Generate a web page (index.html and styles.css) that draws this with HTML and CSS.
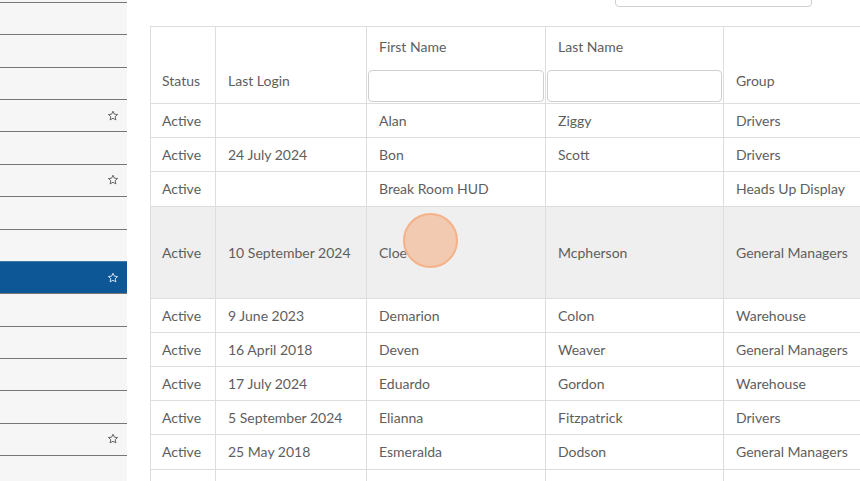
FILE: index.html
```html
<!DOCTYPE html>
<html>
<head>
<meta charset="utf-8">
<link rel="stylesheet" href="styles.css">
</head>
<body>
<div class="app">
  <nav class="sidebar">
    <div class="item"></div>
    <div class="item"></div>
    <div class="item"></div>
    <div class="item"><svg class="star" viewBox="0 0 12 12"><path d="M6 1.2 7.4 4.2 10.6 4.5 8.2 6.7 8.9 9.9 6 8.3 3.1 9.9 3.8 6.7 1.4 4.5 4.6 4.2Z"/></svg></div>
    <div class="item"></div>
    <div class="item"><svg class="star" viewBox="0 0 12 12"><path d="M6 1.2 7.4 4.2 10.6 4.5 8.2 6.7 8.9 9.9 6 8.3 3.1 9.9 3.8 6.7 1.4 4.5 4.6 4.2Z"/></svg></div>
    <div class="item"></div>
    <div class="item"></div>
    <div class="item active"><svg class="star" viewBox="0 0 12 12"><path d="M6 1.2 7.4 4.2 10.6 4.5 8.2 6.7 8.9 9.9 6 8.3 3.1 9.9 3.8 6.7 1.4 4.5 4.6 4.2Z"/></svg></div>
    <div class="item"></div>
    <div class="item"></div>
    <div class="item"></div>
    <div class="item"></div>
    <div class="item"><svg class="star" viewBox="0 0 12 12"><path d="M6 1.2 7.4 4.2 10.6 4.5 8.2 6.7 8.9 9.9 6 8.3 3.1 9.9 3.8 6.7 1.4 4.5 4.6 4.2Z"/></svg></div>
    <div class="item"></div>
  </nav>
  <main class="main">
    <div class="toolbar"><input class="search" type="text"></div>
    <table class="grid">
      <colgroup>
        <col class="w-status"><col class="w-login"><col class="w-first"><col class="w-last"><col class="w-group">
      </colgroup>
      <thead>
        <tr>
          <th>Status</th>
          <th>Last Login</th>
          <th class="filter"><div class="label">First Name</div><input type="text"></th>
          <th class="filter"><div class="label">Last Name</div><input type="text"></th>
          <th>Group</th>
        </tr>
      </thead>
      <tbody>
        <tr><td>Active</td><td></td><td>Alan</td><td>Ziggy</td><td>Drivers</td></tr>
        <tr><td>Active</td><td>24 July 2024</td><td>Bon</td><td>Scott</td><td>Drivers</td></tr>
        <tr><td>Active</td><td></td><td>Break Room HUD</td><td></td><td>Heads Up Display</td></tr>
        <tr class="hover"><td>Active</td><td>10 September 2024</td><td>Cloe</td><td>Mcpherson</td><td>General Managers</td></tr>
        <tr><td>Active</td><td>9 June 2023</td><td>Demarion</td><td>Colon</td><td>Warehouse</td></tr>
        <tr><td>Active</td><td>16 April 2018</td><td>Deven</td><td>Weaver</td><td>General Managers</td></tr>
        <tr><td>Active</td><td>17 July 2024</td><td>Eduardo</td><td>Gordon</td><td>Warehouse</td></tr>
        <tr><td>Active</td><td>5 September 2024</td><td>Elianna</td><td>Fitzpatrick</td><td>Drivers</td></tr>
        <tr><td>Active</td><td>25 May 2018</td><td>Esmeralda</td><td>Dodson</td><td>General Managers</td></tr>
        <tr><td>Active</td><td>12 March 2024</td><td>Ernie</td><td></td><td>Drivers</td></tr>
      </tbody>
    </table>
    <div class="cursor"></div>
  </main>
</div>
</body>
</html>
```
FILE: styles.css
```css
html, body {
  margin: 0;
  padding: 0;
  height: 481px;
  overflow: hidden;
  background: #fff;
  font-family: Lato, "Open Sans", sans-serif;
  color: #5e5e5e;
}
.app {
  display: flex;
  height: 481px;
}
.sidebar {
  width: 127px;
  flex: none;
  background: #f6f6f6;
  padding-top: 2px;
  box-sizing: border-box;
}
.item {
  height: 31.36px;
  border-top: 1px solid #777;
  display: flex;
  align-items: center;
  justify-content: flex-end;
  padding-right: 8px;
}
.item.active {
  background: #0d5796;
  border-top-color: #3f79a8;
}
.star {
  width: 12px;
  height: 12px;
  fill: none;
  stroke: #555;
  stroke-width: 0.9;
  stroke-linejoin: round;
}
.active .star { stroke: #e6eef6; }
.main {
  position: relative;
  flex: 1;
  padding-left: 23px;
  min-width: 0;
}
.toolbar {
  height: 26px;
  display: flex;
}
.search {
  margin-left: 465px;
  margin-top: -24px;
  width: 197px;
  height: 31px;
  box-sizing: border-box;
  border: 1px solid #cfcfcf;
  border-radius: 4px;
  background: #fff;
}
.grid {
  border-collapse: collapse;
  table-layout: fixed;
  width: 860px;
  font-size: 14px;
}
.w-status { width: 65px; }
.w-login { width: 151px; }
.w-first { width: 179px; }
.w-last { width: 178px; }
.w-group { width: 287px; }
.grid th, .grid td {
  border: 1px solid #dedede;
  text-align: left;
  font-weight: 400;
  padding: 0 12px;
  white-space: nowrap;
  overflow: hidden;
}
.grid th:first-child, .grid td:first-child { padding-left: 11px; }
.grid th {
  height: 77px;
  vertical-align: bottom;
  padding-bottom: 14px;
  box-sizing: border-box;
}
.grid th.filter {
  padding: 0 1px;
  vertical-align: top;
}
.label {
  padding: 10px 11px 0;
  height: 43px;
  line-height: 20px;
  box-sizing: border-box;
}
.filter input {
  display: block;
  width: 100%;
  height: 32px;
  box-sizing: border-box;
  border: 1px solid #cfcfcf;
  border-radius: 4px;
  background: #fff;
  margin: 0;
}
.grid td {
  height: 34.2px;
  box-sizing: border-box;
}
.grid tr.hover td {
  height: 92px;
  background: #efefef;
}
.cursor {
  position: absolute;
  left: 276px;
  top: 213px;
  width: 51px;
  height: 51px;
  border-radius: 50%;
  background: rgba(244, 170, 125, 0.55);
  border: 2px solid #f4b289;
}
```
